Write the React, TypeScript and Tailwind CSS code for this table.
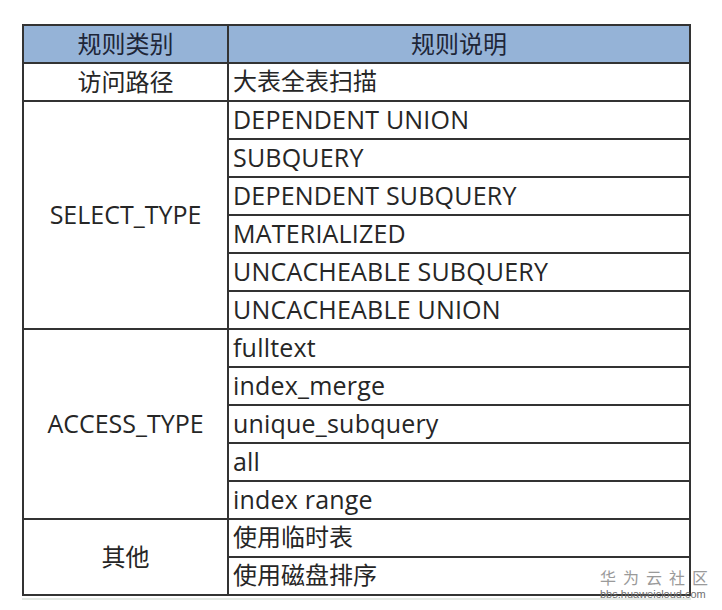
import React from 'react';

const font = { fontFamily: '"Open Sans", "Noto Sans CJK SC", sans-serif' };

// second-column rows, in order (header excluded)
const details = [
  '大表全表扫描',
  'DEPENDENT UNION',
  'SUBQUERY',
  'DEPENDENT SUBQUERY',
  'MATERIALIZED',
  'UNCACHEABLE SUBQUERY',
  'UNCACHEABLE UNION',
  'fulltext',
  'index_merge',
  'unique_subquery',
  'all',
  'index range',
  '使用临时表',
  '使用磁盘排序',
];

// first-column groups: label + number of rows it spans
const groups = [
  { label: '访问路径', span: 'row-span-1' },
  { label: 'SELECT_TYPE', span: 'row-span-6' },
  { label: 'ACCESS_TYPE', span: 'row-span-5' },
  { label: '其他', span: 'row-span-2' },
];

const isLatin = (s: string) => /^[\x00-\x7f]+$/.test(s);

export default function App() {
  return (
    <div className="relative w-[722px] h-[610px] bg-white overflow-hidden" style={font}>
      <div className="absolute left-[22px] top-[24px] w-[669px]">
        <div className="grid grid-cols-[203px_460px] grid-rows-[repeat(15,36px)] grid-flow-col gap-[2px] p-[2px] bg-[#333333] text-[#262626]">
          {/* column 1 */}
          <div className="bg-[#95b3d7] flex items-center justify-center text-[24px] text-[#1e2638]">规则类别</div>
          {groups.map((g) => (
            <div
              key={g.label}
              className={`${g.span} bg-white flex items-center justify-center ${isLatin(g.label) ? 'text-[25px]' : 'text-[24px]'}`}
            >
              {g.label}
            </div>
          ))}
          {/* column 2 */}
          <div className="bg-[#95b3d7] flex items-center justify-center text-[24px] text-[#1e2638]">规则说明</div>
          {details.map((d) => (
            <div
              key={d}
              className={`bg-white flex items-center pl-[4px] pb-[2px] leading-none ${isLatin(d) ? 'text-[25px] tracking-[0.2px]' : 'text-[24px]'}`}
            >
              {d}
            </div>
          ))}
        </div>
        <div className="h-[2px] mt-[2px] w-[669px] bg-[#e3e8e3]" />
      </div>

      {/* watermark */}
      <div className="absolute left-[600px] top-[567px] flex flex-col items-start text-[#9a9a9a]">
        <span className="text-[16px] leading-[20px] tracking-[7px]" style={{ fontFamily: '"Noto Sans CJK SC", sans-serif' }}>
          华为云社区
        </span>
        <span className="mt-[2px] text-[11px] leading-[11px] text-[#6f6f6f]" style={{ fontFamily: '"Liberation Sans", sans-serif' }}>
          bbs.huaweicloud.com
        </span>
      </div>
    </div>
  );
}
